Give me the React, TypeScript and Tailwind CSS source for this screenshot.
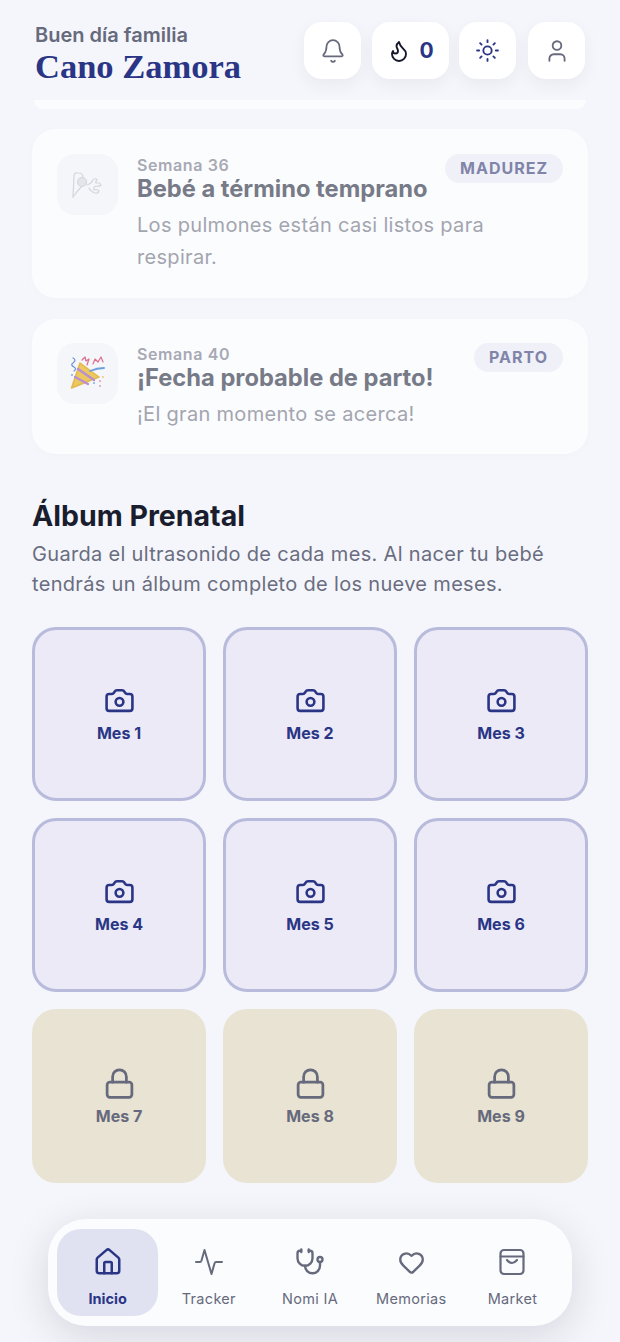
import React from "react";
import { Bell, Camera, Flame, Heart, House, Lock, Stethoscope, Sun, User } from "lucide-react";

const months = [1, 2, 3, 4, 5, 6, 7, 8, 9];

// Faded lungs + breath glyph for week 36
function LungsIcon() {
  return (
    <svg width="34" height="30" viewBox="0 0 34 30" fill="none" stroke="#d4d6dd" strokeWidth="1.2" strokeLinecap="round" strokeLinejoin="round">
      <path d="M2 27 L3 6 Q3 2 7 3 Q12 3 12 7" />
      <path d="M2 27 Q7 20 11 16" />
      <circle cx="11" cy="12" r="4.5" fill="#e4e5ea" />
      <path d="M16 15 Q20 14 22 10 Q25 7 26 10 Q24 12 25 13 Q29 12 30 15 Q28 17 25 16 Q22 17 23 20 Q26 19 28 21 Q27 24 24 23 Q20 22 18 18" />
    </svg>
  );
}

// Party popper glyph for week 40
function PopperIcon() {
  return (
    <svg width="36" height="36" viewBox="0 0 36 36" fill="none" strokeLinecap="round" strokeLinejoin="round">
      <path d="M1.5 32 L10 7 L29 21 Z" fill="#edc85f" stroke="#e3b94e" strokeWidth="1.5" strokeLinejoin="round" />
      <path d="M5 21 L18 28" stroke="#b88fd0" strokeWidth="2.4" />
      <path d="M8 13 L24 24" stroke="#b88fd0" strokeWidth="2.4" />
      <path d="M3 2 Q7 4 3 7 Q0 9 4 11 Q7 13 4 15" stroke="#6c8fd8" strokeWidth="1.2" />
      <path d="M12 4 L15 1 L16 5 L19 3 L17 9" stroke="#d96f8a" strokeWidth="1.2" />
      <path d="M23 8 L25 3 L28 6 L31 1 L33 6" stroke="#dd6d8d" strokeWidth="1.2" />
      <path d="M20 15 Q27 12 34 12" stroke="#6c9fe0" strokeWidth="1.8" />
      <circle cx="30" cy="25" r="1" fill="#e79aa8" />
      <circle cx="33" cy="21" r="0.9" fill="#edc85f" />
      <circle cx="30" cy="30" r="1" fill="#e79aa8" />
      <circle cx="24" cy="27" r="0.9" fill="#7ca2e0" />
      <circle cx="2" cy="19" r="0.9" fill="#7ca2e0" />
    </svg>
  );
}

function TrackerIcon() {
  return (
    <svg width="28" height="28" viewBox="0 0 28 28" fill="none" stroke="#666a7c" strokeWidth="2" strokeLinecap="round" strokeLinejoin="round">
      <path d="M1 14 L5 14 Q6 14 6.5 12.5 L9.5 2 L16.5 26 L19.5 15.5 Q20 14 21 14 L27 14" />
    </svg>
  );
}

function BagIcon() {
  return (
    <svg width="26" height="28" viewBox="0 0 26 28" fill="none" stroke="#666a7c" strokeWidth="2.2" strokeLinecap="round" strokeLinejoin="round">
      <path d="M1.5 8.5 L24.5 8.5" />
      <rect x="1.5" y="2" width="23" height="24" rx="3.5" />
      <path d="M8 12 Q13 18 18 12" />
    </svg>
  );
}

function HeaderButton({ children, className }: { children: React.ReactNode; className: string }) {
  return (
    <div className={`flex h-[57px] items-center justify-center rounded-[18px] bg-white shadow-[0_6px_16px_rgba(40,50,90,0.06)] ${className}`}>
      {children}
    </div>
  );
}

function MilestoneCard({
  week,
  title,
  body,
  badge,
  icon,
  className,
  badgeClassName,
}: {
  week: string;
  title: string;
  body: string;
  badge: string;
  icon: React.ReactNode;
  className: string;
  badgeClassName: string;
}) {
  return (
    <div className={`relative flex items-start gap-[19px] rounded-[24px] bg-[#fbfcfe] pl-[25px] pr-[24px] shadow-[0_2px_10px_rgba(40,50,90,0.015)] ${className}`}>
      <div className="flex h-[61px] w-[61px] shrink-0 items-center justify-center rounded-[18px] bg-[#f5f6f9]">
        {icon}
      </div>
      <div className="min-w-0 flex-1 pt-[2px]">
        <p className="text-[16px] font-semibold leading-[18px] tracking-[0.6px] text-[#a7a9b4]">{week}</p>
        <h3 className="text-[23.7px] font-bold leading-[30px] text-[#777a87]">{title}</h3>
        <p className="mt-[5px] text-[20px] leading-[32px] tracking-[0.31px] text-[#a3a5af]">{body}</p>
      </div>
      <span className={`absolute right-[25px] rounded-full bg-[#eff0f8] px-[15px] text-[16px] font-bold leading-[29px] tracking-[1px] text-[#8084a8] ${badgeClassName}`}>
        {badge}
      </span>
    </div>
  );
}

function NavItem({ icon, label, active }: { icon: React.ReactNode; label: string; active?: boolean }) {
  return (
    <div className={`flex h-[87px] flex-1 flex-col items-center gap-[11px] rounded-[24px] pt-[17px] ${active ? "bg-[#e0e2f1]" : ""}`}>
      <div className="flex h-[32px] items-center justify-center">{icon}</div>
      <span className={`text-[14.5px] leading-[20px] ${active ? "font-bold text-[#2a3585]" : "font-normal tracking-[0.3px] text-[#666a7c]"}`}>
        {label}
      </span>
    </div>
  );
}

export default function App() {
  return (
    <div className="relative h-[1342px] w-[620px] overflow-hidden bg-[#f5f6fb] font-['Inter',sans-serif]">
      {/* Header */}
      <header className="flex h-[100px] items-start justify-between pl-[35px] pr-[35px] pt-[22px]">
        <div>
          <p className="text-[20px] font-semibold leading-[26px] text-[#666a7c]">Buen día familia</p>
          <h1 className="font-['Liberation_Serif',serif] text-[34.5px] font-bold leading-[36px] text-[#2a3585]">Cano Zamora</h1>
        </div>
        <div className="flex">
          <HeaderButton className="w-[57px]">
            <Bell size={26} strokeWidth={1.6} color="#666a7c" />
          </HeaderButton>
          <HeaderButton className="ml-[11px] w-[77px] gap-[8px]">
            <Flame size={24} strokeWidth={1.9} color="#15172a" />
            <span className="text-[21px] font-bold text-[#2a3585]">0</span>
          </HeaderButton>
          <HeaderButton className="ml-[10px] w-[57px]">
            <Sun size={25} strokeWidth={1.8} color="#2a3585" />
          </HeaderButton>
          <HeaderButton className="ml-[12px] w-[57px]">
            <User size={26} strokeWidth={1.7} color="#666a7c" />
          </HeaderButton>
        </div>
      </header>

      <main className="px-[32px]">
        {/* Bottom edge of the previous card, scrolled under the header */}
        <div className="mx-[2px] h-[9px] rounded-b-[16px] bg-[#fbfcfe]" />

        <div className="mt-[20px] flex flex-col gap-[21px]">
          <MilestoneCard
            className="h-[169px] pt-[25px]"
            badgeClassName="top-[25px]"
            week="Semana 36"
            title="Bebé a término temprano"
            body="Los pulmones están casi listos para respirar."
            badge="MADUREZ"
            icon={<LungsIcon />}
          />
          <MilestoneCard
            className="h-[135px] pt-[24px]"
            badgeClassName="top-[24px]"
            week="Semana 40"
            title="¡Fecha probable de parto!"
            body="¡El gran momento se acerca!"
            badge="PARTO"
            icon={<PopperIcon />}
          />
        </div>

        {/* Album */}
        <section className="mt-[44px]">
          <h2 className="text-[28.5px] font-bold leading-[36px] text-[#1a1d2e]">Álbum Prenatal</h2>
          <p className="mt-[5px] text-[20px] leading-[30px] tracking-[0.32px] text-[#6a6d80]">
            Guarda el ultrasonido de cada mes. Al nacer tu bebé tendrás un álbum completo de los nueve meses.
          </p>
          <div className="mt-[28px] grid grid-cols-3 gap-[17px]">
            {months.map((m) =>
              m <= 6 ? (
                <div key={m} className="flex aspect-square flex-col items-center justify-center gap-[3px] rounded-[24px] border-[3px] border-[#b9bbdc] bg-[#ebeaf6] pb-[2px]">
                  <div className="flex h-[36px] items-center justify-center">
                    <Camera size={31} strokeWidth={2} color="#2a3585" />
                  </div>
                  <span className="text-[16px] font-bold leading-[22px] text-[#2a3585]">Mes {m}</span>
                </div>
              ) : (
                <div key={m} className="flex aspect-square flex-col items-center justify-center gap-[3px] rounded-[24px] bg-[#e8e3d3]">
                  <div className="flex h-[36px] items-center justify-center">
                    <Lock size={33} strokeWidth={2} color="#666a7c" />
                  </div>
                  <span className="text-[16px] font-bold leading-[22px] text-[#666a7c]">Mes {m}</span>
                </div>
              )
            )}
          </div>
        </section>
      </main>

      {/* Bottom nav */}
      <nav className="absolute bottom-[16px] left-[48px] flex h-[107px] w-[524px] items-center rounded-[38px] bg-[#fbfcfe] px-[9px] shadow-[0_10px_40px_rgba(30,30,50,0.14)]">
        <NavItem active icon={<House size={30} strokeWidth={2} color="#2a3585" />} label="Inicio" />
        <NavItem icon={<TrackerIcon />} label="Tracker" />
        <NavItem icon={<Stethoscope size={30} strokeWidth={1.9} color="#666a7c" />} label="Nomi IA" />
        <NavItem icon={<Heart size={27} strokeWidth={2.1} color="#666a7c" />} label="Memorias" />
        <NavItem icon={<BagIcon />} label="Market" />
      </nav>
    </div>
  );
}
